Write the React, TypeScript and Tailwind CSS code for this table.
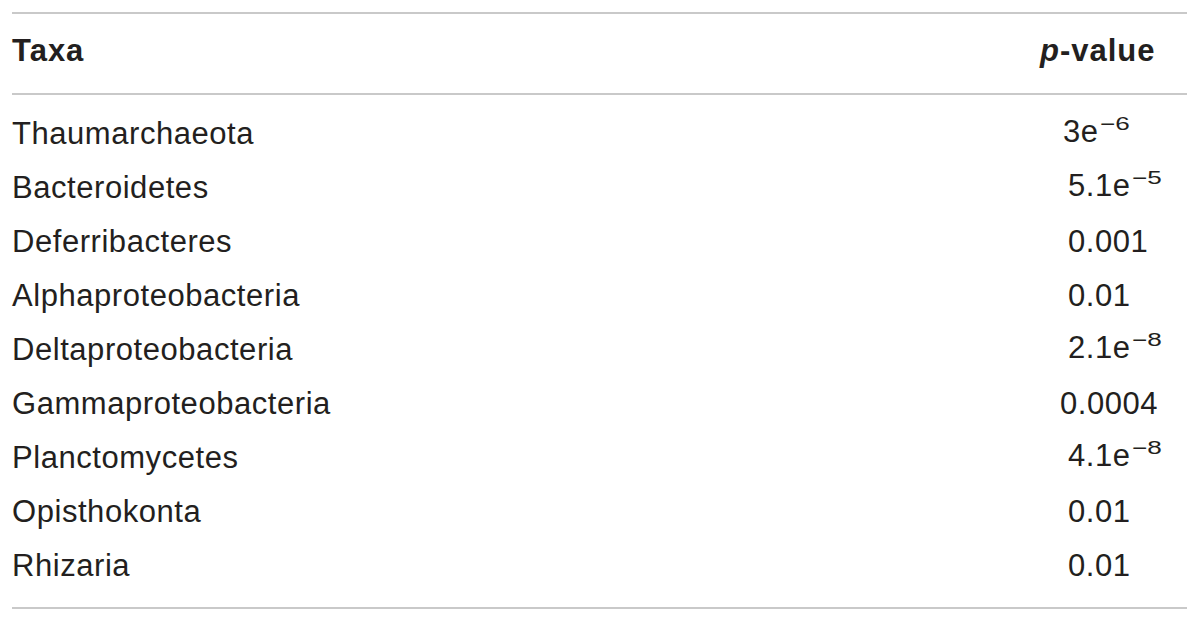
const rows: { taxon: string; value: string; exp?: string; shift: string }[] = [
    { taxon: "Thaumarchaeota", value: "3e", exp: "−6", shift: "ml-[-5px]" },
    { taxon: "Bacteroidetes", value: "5.1e", exp: "−5", shift: "ml-0" },
    { taxon: "Deferribacteres", value: "0.001", shift: "ml-0" },
    { taxon: "Alphaproteobacteria", value: "0.01", shift: "ml-0" },
    { taxon: "Deltaproteobacteria", value: "2.1e", exp: "−8", shift: "ml-0" },
    { taxon: "Gammaproteobacteria", value: "0.0004", shift: "ml-[-8px]" },
    { taxon: "Planctomycetes", value: "4.1e", exp: "−8", shift: "ml-0" },
    { taxon: "Opisthokonta", value: "0.01", shift: "ml-0" },
    { taxon: "Rhizaria", value: "0.01", shift: "ml-0" },
];

export default function App() {
    return (
        <div className="w-[1200px] h-[622px] bg-white pl-[12px] pt-[12px] font-['Liberation_Sans',Arial,sans-serif] text-[#231f20]">
            <div className="w-[1175px]">
                <div className="flex items-start h-[83px] border-y-2 border-[#c9c9c9] pt-[19px] text-[31px] leading-[36px] font-bold tracking-[1px]">
                    <div className="flex-1">Taxa</div>
                    <div className="w-[147px]">
                        <span className="italic">p</span>-value
                    </div>
                </div>
                <div className="pt-[12px] pb-[14px] border-b-2 border-[#c9c9c9]">
                    {rows.map((row) => (
                        <div
                            key={row.taxon}
                            className="flex items-center h-[54px] text-[31px] leading-[36px] tracking-[0.55px]"
                        >
                            <div className="flex-1">{row.taxon}</div>
                            <div className="w-[119px]">
                                <span className={row.shift}>
                                    {row.value}
                                    {row.exp && (
                                        <span className="inline-block w-[35px] relative -top-[12px] text-[18px] tracking-normal origin-left scale-x-[1.45] ml-[1px]">
                                            {row.exp}
                                        </span>
                                    )}
                                </span>
                            </div>
                        </div>
                    ))}
                </div>
            </div>
        </div>
    );
}
